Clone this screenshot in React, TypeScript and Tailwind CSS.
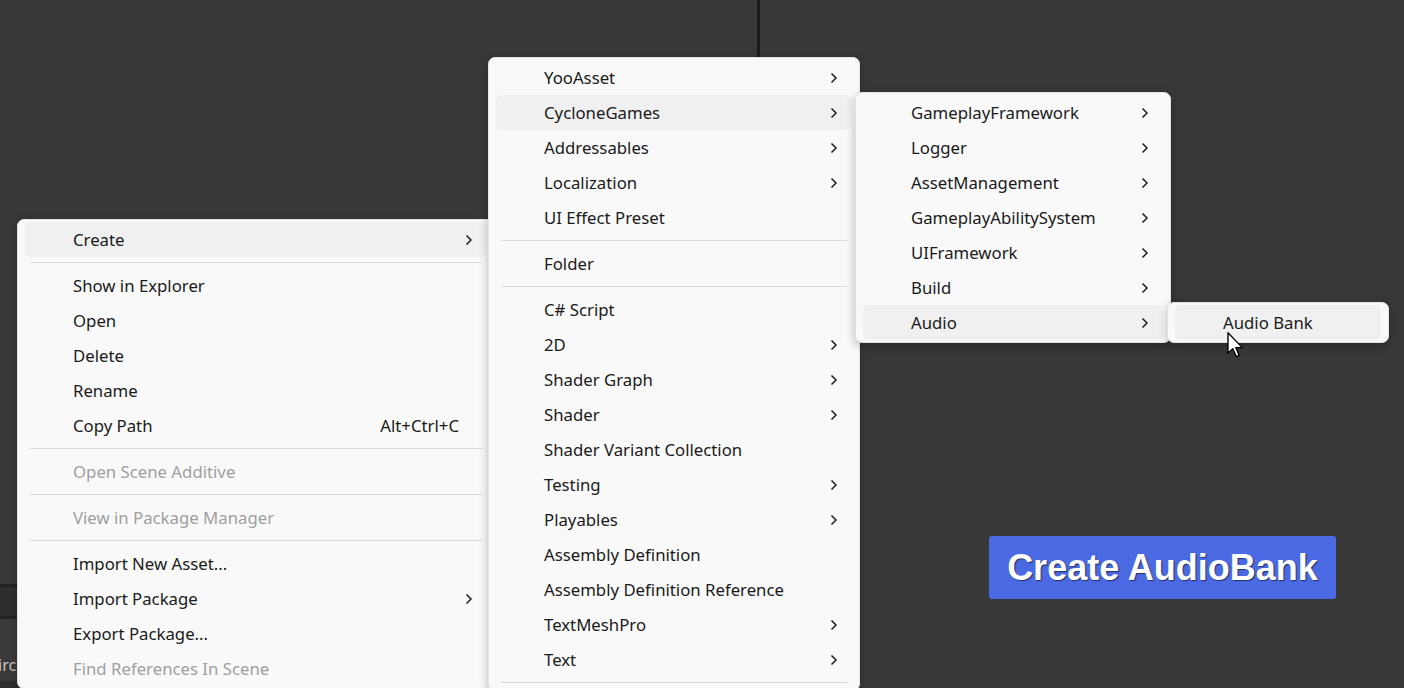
import React from 'react';

type Item =
  | { kind: 'sep' }
  | { kind: 'item'; label: string; sub?: boolean; active?: boolean; disabled?: boolean; shortcut?: string };

const it = (label: string, opts: Partial<Omit<Extract<Item, { kind: 'item' }>, 'kind' | 'label'>> = {}): Item => ({
  kind: 'item',
  label,
  ...opts,
});
const sep: Item = { kind: 'sep' };

const projectMenu: Item[] = [
  it('Create', { sub: true, active: true }),
  sep,
  it('Show in Explorer'),
  it('Open'),
  it('Delete'),
  it('Rename'),
  it('Copy Path', { shortcut: 'Alt+Ctrl+C' }),
  sep,
  it('Open Scene Additive', { disabled: true }),
  sep,
  it('View in Package Manager', { disabled: true }),
  sep,
  it('Import New Asset...'),
  it('Import Package', { sub: true }),
  it('Export Package...'),
  it('Find References In Scene', { disabled: true }),
];

const createMenu: Item[] = [
  it('YooAsset', { sub: true }),
  it('CycloneGames', { sub: true, active: true }),
  it('Addressables', { sub: true }),
  it('Localization', { sub: true }),
  it('UI Effect Preset'),
  sep,
  it('Folder'),
  sep,
  it('C# Script'),
  it('2D', { sub: true }),
  it('Shader Graph', { sub: true }),
  it('Shader', { sub: true }),
  it('Shader Variant Collection'),
  it('Testing', { sub: true }),
  it('Playables', { sub: true }),
  it('Assembly Definition'),
  it('Assembly Definition Reference'),
  it('TextMeshPro', { sub: true }),
  it('Text', { sub: true }),
  sep,
];

const cycloneMenu: Item[] = [
  it('GameplayFramework', { sub: true }),
  it('Logger', { sub: true }),
  it('AssetManagement', { sub: true }),
  it('GameplayAbilitySystem', { sub: true }),
  it('UIFramework', { sub: true }),
  it('Build', { sub: true }),
  it('Audio', { sub: true, active: true }),
];

const audioMenu: Item[] = [it('Audio Bank', { active: true })];

const Chevron = () => (
  <svg width="8" height="12" viewBox="0 0 8 12" className="shrink-0 -mt-[2px]">
    <path d="M1.5 1.5 L6 6 L1.5 10.5" fill="none" stroke="#1f1f1f" strokeWidth="1.5" />
  </svg>
);

const Menu: React.FC<{ items: Item[]; className: string }> = ({ items, className }) => (
  <div
    className={`absolute bg-[#f9f9f9] border border-[#e3e3e3] rounded-[7px] px-[7px] py-[2px] shadow-[0_3px_10px_rgba(0,0,0,0.28)] ${className}`}
  >
    {items.map((item, i) =>
      item.kind === 'sep' ? (
        <div key={i} className="h-[11px] flex items-center px-[5px]">
          <div className="h-px w-full bg-[#d9d9d9]" />
        </div>
      ) : (
        <div
          key={i}
          className={`h-[35px] flex items-center pt-[2px] pl-[48px] pr-[14px] rounded-[5px] ${
            item.active ? 'bg-[#f0f0f0]' : ''
          } ${item.disabled ? 'text-[#9f9f9f]' : 'text-[#1a1a1a]'}`}
        >
          <span className="flex-1 whitespace-nowrap">{item.label}</span>
          {item.shortcut && <span className="pr-[14px] whitespace-nowrap">{item.shortcut}</span>}
          {item.sub && <Chevron />}
        </div>
      )
    )}
  </div>
);

const Cursor = () => (
  <svg width="17" height="26" viewBox="0 0 12 19" className="absolute left-[1227px] top-[332px]">
    <path
      d="M0.5 0.5 L0.5 15.5 L4 12.2 L6.6 18 L8.7 17.1 L6.2 11.4 L11 11.4 Z"
      fill="#ffffff"
      stroke="#000000"
      strokeWidth="1"
      strokeLinejoin="round"
    />
  </svg>
);

export default function App() {
  return (
    <div
      className="relative w-[1404px] h-[688px] overflow-hidden bg-[#383838] text-[16.75px] leading-none"
      style={{ fontFamily: '"Noto Sans", "Open Sans", sans-serif' }}
    >
      {/* scene view split line */}
      <div className="absolute left-[757px] top-0 w-[3px] h-[60px] bg-[#1b1b1b]" />

      {/* project window strip peeking out on the left */}
      <div className="absolute left-0 top-[584px] w-[18px] h-[104px] flex flex-col">
        <div className="h-[3px] bg-[#232323]" />
        <div className="h-[29px] bg-[#2e2e2e]" />
        <div className="h-[3px] bg-[#242424]" />
        <div className="h-[62px] bg-[#3a3a3a] flex items-end pb-[8px] overflow-hidden">
          <span className="text-[#c4c4c4] text-[16px] -ml-[2px]">irc</span>
        </div>
        <div className="flex-1 bg-[#2e2e2e]" />
      </div>

      <Menu items={projectMenu} className="left-[17px] top-[219px] w-[478px]" />
      <Menu items={createMenu} className="left-[488px] top-[57px] w-[372px]" />
      <Menu items={cycloneMenu} className="left-[855px] top-[92px] w-[316px]" />
      <Menu items={audioMenu} className="left-[1167px] top-[302px] w-[222px]" />

      <button
        className="absolute left-[989px] top-[536px] w-[347px] h-[63px] rounded-[3px] bg-[#4a69e2] text-white font-bold text-[36px] flex items-center justify-center [text-shadow:1px_1px_1px_rgba(0,0,0,0.55)]"
        style={{ fontFamily: '"Liberation Sans", Arial, sans-serif' }}
      >
        Create AudioBank
      </button>

      <Cursor />
    </div>
  );
}
